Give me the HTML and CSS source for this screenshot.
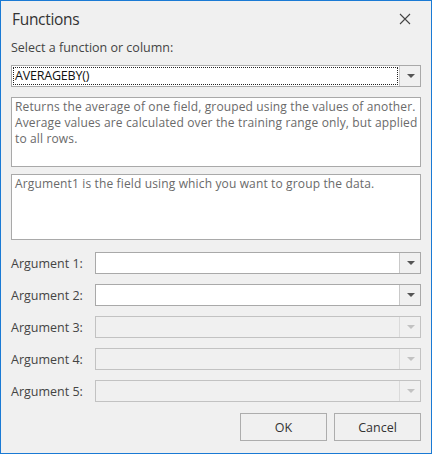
FILE: index.html
```html
<!DOCTYPE html>
<html>
<head>
<meta charset="utf-8">
<link rel="stylesheet" href="styles.css">
</head>
<body>
<div class="dialog">
  <div class="titlebar">
    <span class="title">Functions</span>
    <svg class="close" width="12" height="12" viewBox="0 0 12 12"><path d="M1 1 L11 11 M11 1 L1 11" stroke="#444" stroke-width="1.1" fill="none"/></svg>
  </div>
  <div class="content">
    <div class="label-top">Select a function or column:</div>
    <div class="combo main">
      <div class="combo-text"><span class="focus">AVERAGEBY()</span></div>
      <div class="combo-btn"><span class="arrow"></span></div>
    </div>
    <div class="box desc">Returns the average of one field, grouped using the values of another.<br>Average values are calculated over the training range only, but applied<br>to all rows.</div>
    <div class="box arg-desc">Argument1 is the field using which you want to group the data.</div>
    <div class="args">
      <div class="arg-row"><span class="arg-label">Argument 1:</span><div class="combo"><div class="combo-text"></div><div class="combo-btn"><span class="arrow"></span></div></div></div>
      <div class="arg-row"><span class="arg-label">Argument 2:</span><div class="combo"><div class="combo-text"></div><div class="combo-btn"><span class="arrow"></span></div></div></div>
      <div class="arg-row"><span class="arg-label">Argument 3:</span><div class="combo disabled"><div class="combo-text"></div><div class="combo-btn"><span class="arrow"></span></div></div></div>
      <div class="arg-row"><span class="arg-label">Argument 4:</span><div class="combo disabled"><div class="combo-text"></div><div class="combo-btn"><span class="arrow"></span></div></div></div>
      <div class="arg-row"><span class="arg-label">Argument 5:</span><div class="combo disabled"><div class="combo-text"></div><div class="combo-btn"><span class="arrow"></span></div></div></div>
    </div>
    <div class="buttons">
      <button class="btn">OK</button>
      <button class="btn">Cancel</button>
    </div>
  </div>
</div>
</body>
</html>
```
FILE: styles.css
```css
html, body {
  margin: 0;
  padding: 0;
  background: #f0f0f0;
}
.dialog {
  box-sizing: border-box;
  width: 432px;
  height: 454px;
  border: 1px solid #1a7ad4;
  background: #f0f0f0;
  font-family: "Open Sans", "Noto Sans", sans-serif;
  font-size: 12.5px;
  color: #444;
  display: flex;
  flex-direction: column;
}
.titlebar {
  height: 37px;
  display: flex;
  align-items: center;
  justify-content: space-between;
  padding: 0 20px 0 11px;
}
.title {
  font-size: 15.5px;
  color: #333;
  letter-spacing: -0.3px;
  margin-top: -1px;
}
.close {
  display: block;
  margin-top: -2px;
}
.content {
  padding: 0 10px 0 9px;
  display: flex;
  flex-direction: column;
}
.label-top {
  height: 27px;
  line-height: 20px;
  padding-left: 1px;
  color: #444;
}
.combo {
  box-sizing: border-box;
  height: 22px;
  border: 1px solid #a9a9a9;
  background: #fff;
  display: flex;
  flex: 1;
}
.combo-text {
  flex: 1;
  padding: 1px;
  display: flex;
}
.combo-btn {
  width: 20px;
  border-left: 1px solid #c9c9c9;
  background: #f0f0f0;
  display: flex;
  align-items: center;
  justify-content: center;
}
.arrow {
  width: 0;
  height: 0;
  border-left: 4px solid transparent;
  border-right: 4px solid transparent;
  border-top: 4px solid #555;
  margin-left: 1px;
}
.combo.disabled {
  background: #f0f0f0;
  border-color: #c2c2c2;
}
.combo.disabled .combo-btn {
  border-left-color: #dadada;
}
.combo.disabled .arrow {
  border-top-color: #c2c2c2;
}
.main {
  flex: none;
  margin-left: 1px;
}
.focus {
  flex: 1;
  border: 1px dotted #222;
  line-height: 16px;
  padding-left: 1px;
  color: #111;
  font-size: 12.5px;
  letter-spacing: -0.2px;
}
.box {
  box-sizing: border-box;
  border: 1px solid #a9a9a9;
  background: #fff;
  margin-left: 1px;
  padding: 1px 3px;
  line-height: 16px;
  color: #6a6a6a;
  font-size: 12px;
  letter-spacing: 0.14px;
  white-space: nowrap;
  overflow: hidden;
}
.desc {
  margin-top: 10px;
  height: 70px;
}
.arg-desc {
  margin-top: 7px;
  height: 66px;
}
.args {
  margin-top: 12px;
  display: flex;
  flex-direction: column;
  gap: 10px;
}
.arg-row {
  display: flex;
  align-items: center;
  height: 22px;
}
.arg-label {
  width: 84px;
  padding-left: 1px;
  color: #444;
}
.buttons {
  margin-top: 11px;
  display: flex;
  justify-content: flex-end;
  gap: 7px;
}
.btn {
  box-sizing: border-box;
  width: 87px;
  height: 28px;
  border: 1px solid #adadad;
  background: #f0f0f0;
  font-family: "Open Sans", "Noto Sans", sans-serif;
  font-size: 12.5px;
  color: #333;
  padding: 0;
}
```
